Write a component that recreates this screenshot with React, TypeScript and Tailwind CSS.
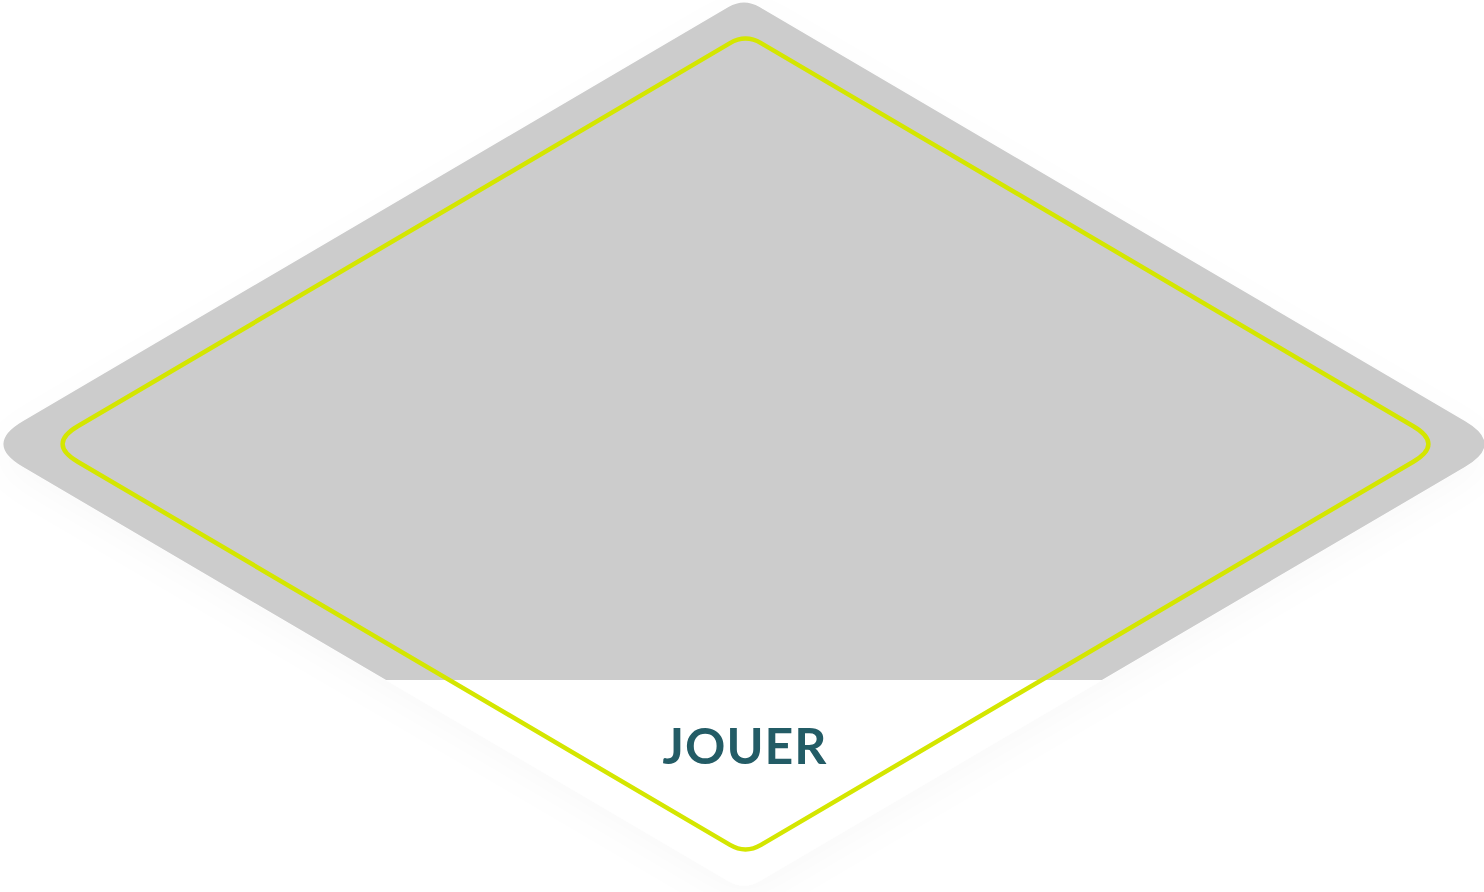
import React from 'react';

type Pt = [number, number];

// rounded diamond path: quadratic corners, separate cut length for top/bottom and side corners
function diamondPath(cx: number, cy: number, w: number, h: number, dTop: number, dSide: number) {
  const v: Pt[] = [
    [cx, cy - h],
    [cx + w, cy],
    [cx, cy + h],
    [cx - w, cy],
  ];
  const ds = [dTop, dSide, dTop, dSide];
  const along = (from: Pt, to: Pt, d: number): Pt => {
    const dx = to[0] - from[0];
    const dy = to[1] - from[1];
    const len = Math.hypot(dx, dy);
    return [from[0] + (dx / len) * d, from[1] + (dy / len) * d];
  };
  let path = '';
  for (let i = 0; i < 4; i++) {
    const prev = v[(i + 3) % 4];
    const next = v[(i + 1) % 4];
    const a = along(v[i], prev, ds[i]);
    const b = along(v[i], next, ds[i]);
    path += `${i === 0 ? 'M' : 'L'}${a[0].toFixed(1)},${a[1].toFixed(1)} Q${v[i][0]},${v[i][1]} ${b[0].toFixed(1)},${b[1].toFixed(1)} `;
  }
  return path + 'Z';
}

export default function App() {
  const outer = diamondPath(744, 444, 760, 446, 18, 45);
  const inner = diamondPath(745.5, 444, 698, 410, 18, 35);

  return (
    <div className="relative w-full h-[892px] overflow-hidden bg-white">
      {/* tile shape */}
      <svg className="absolute inset-0" width="1484" height="892" viewBox="0 0 1484 892">
        <defs>
          <filter id="tileShadow" filterUnits="userSpaceOnUse" x="-200" y="-200" width="1900" height="1300">
            <feDropShadow dx="0" dy="12" stdDeviation="18" floodColor="#000" floodOpacity="0.025" />
          </filter>
          <clipPath id="imageArea">
            <rect x="0" y="0" width="1484" height="680" />
          </clipPath>
        </defs>
        <path d={outer} fill="#ffffff" filter="url(#tileShadow)" />
        <path d={outer} fill="#cccccc" clipPath="url(#imageArea)" />
        <path d={inner} fill="none" stroke="#d4e600" strokeWidth="4.5" />
      </svg>

      <div className="relative flex flex-col">
        <div className="h-[680px]" />
        <div className="h-[130px] pl-[6px] flex items-center justify-center">
          <span className="font-['Lato',sans-serif] font-bold text-[50px] leading-none tracking-[1px] text-[#235c66]">
            JOUER
          </span>
        </div>
      </div>
    </div>
  );
}
